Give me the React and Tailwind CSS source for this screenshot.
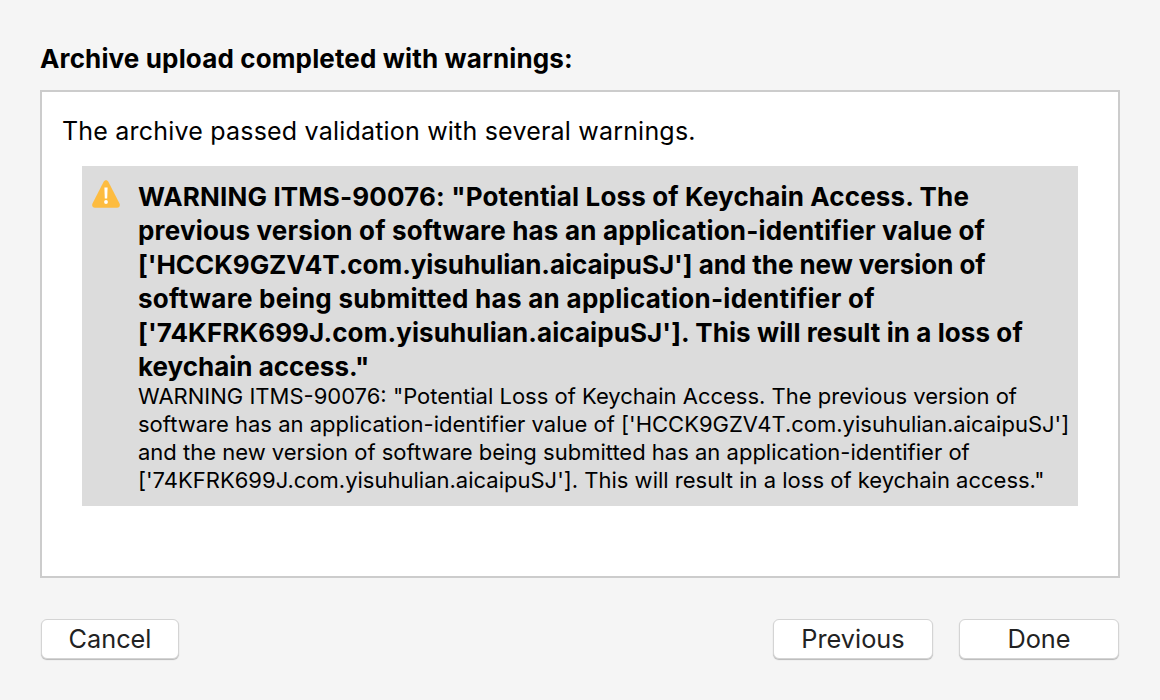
// tracking differs per line because Inter's widths only roughly follow the original font
const HEADING_LINES = [
  { text: 'WARNING ITMS-90076: "Potential Loss of Keychain Access. The', className: 'tracking-[0.15px]' },
  { text: 'previous version of software has an application-identifier value of', className: 'tracking-[0.18px]' },
  { text: "['HCCK9GZV4T.com.yisuhulian.aicaipuSJ'] and the new version of", className: 'tracking-[-0.06px]' },
  { text: 'software being submitted has an application-identifier of', className: 'tracking-[0.28px]' },
  { text: "['74KFRK699J.com.yisuhulian.aicaipuSJ']. This will result in a loss of", className: 'tracking-[0.08px]' },
  { text: 'keychain access."', className: 'tracking-[0px]' },
]

const DETAIL_LINES = [
  'WARNING ITMS-90076: "Potential Loss of Keychain Access. The previous version of',
  "software has an application-identifier value of ['HCCK9GZV4T.com.yisuhulian.aicaipuSJ']",
  'and the new version of software being submitted has an application-identifier of',
  "['74KFRK699J.com.yisuhulian.aicaipuSJ']. This will result in a loss of keychain access.\"",
]

function WarningIcon() {
  return (
    <svg width="28" height="28" viewBox="0 0 28 28" className="shrink-0">
      <path
        d="M14 0.3c1 0 1.9.6 2.5 1.7l11 21.4c1 2.2-.2 4.3-2.4 4.3H2.9c-2.2 0-3.4-2.1-2.4-4.3L11.5 2C12.1.9 13 .3 14 .3z"
        fill="#fdbc40"
      />
      <path d="M12.4 7.5h3.2l-.4 11h-2.4z" fill="#ffffff" />
      <circle cx="14" cy="22" r="1.9" fill="#ffffff" />
    </svg>
  )
}

function Button({ children, className }) {
  return (
    <button
      className={`h-10 rounded-md border border-[#d4d4d4] bg-white text-[25.3px] leading-none text-[#222222] shadow-[0_1px_1px_rgba(0,0,0,0.25)] ${className}`}
    >
      {children}
    </button>
  )
}

export default function App() {
  return (
    <div className="flex h-[700px] w-[1160px] flex-col bg-[#f5f5f5] px-10 pt-[41px] font-['Inter',sans-serif] text-black">
      <h1 className="text-[26px] font-bold leading-9 tracking-[0.14px]">Archive upload completed with warnings:</h1>
      <div className="mt-[13px] h-[488px] border-2 border-[#cccccc] bg-white pl-5 pr-10 pt-[22px]">
        <p className="text-[25px] leading-[34px] tracking-[0.2px]">The archive passed validation with several warnings.</p>
        <div className="ml-5 mt-[18px] flex h-[340px] w-[996px] gap-[18px] bg-[#dcdcdc] pl-2.5 pt-3.5">
          <WarningIcon />
          <div className="whitespace-nowrap">
            {HEADING_LINES.map((line) => (
              <p key={line.text} className={`text-[26px] font-bold leading-[34px] ${line.className}`}>{line.text}</p>
            ))}
            <div className="-mt-0.5">
              {DETAIL_LINES.map((line) => (
                <p key={line} className="text-[22px] leading-7">{line}</p>
              ))}
            </div>
          </div>
        </div>
      </div>
      <div className="mt-[41px] flex pl-px pr-px">
        <Button className="w-[138px]">Cancel</Button>
        <Button className="ml-auto w-40">Previous</Button>
        <Button className="ml-[26px] w-40">Done</Button>
      </div>
    </div>
  )
}
